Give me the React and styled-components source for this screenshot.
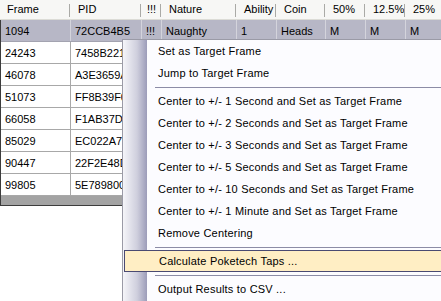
import React from "react";
import styled, { createGlobalStyle } from "styled-components";

const GlobalStyle = createGlobalStyle`
	html, body {
		margin: 0;
		padding: 0;
		background: #ffffff;
		overflow: hidden;
	}
	body {
		font-family: "Liberation Sans", Arial, sans-serif;
		font-size: 11px;
		color: #000000;
	}
`;

const COLS = "70px 71px 20px 75px 40px 49px 40px 40px 40px";

const Page = styled.div`
	position: relative;
	width: 441px;
	height: 301px;
	overflow: hidden;
	background: #ffffff;
`;

const ListView = styled.div`
	width: 447px;
	display: flex;
	flex-direction: column;
`;

const Header = styled.div`
	display: grid;
	grid-template-columns: 71px 71px 20px 75px 40px 49px 40px 40px 40px;
	height: 19px;
	background: #f7f7f5;
	border-bottom: 1px solid #dcdcd6;
`;

const HeadCell = styled.div`
	position: relative;
	padding-left: ${(p) => p.$pad || 8}px;
	line-height: 19px;
	white-space: nowrap;
	overflow: hidden;

	&::after {
		content: "";
		position: absolute;
		right: ${(p) => p.$sep || 1}px;
		top: 4px;
		bottom: 2px;
		width: 1px;
		background: #aaaaa6;
	}
`;

const Body = styled.div`
	border-left: 1px solid #3c3c3c;
	border-bottom: 1px solid #3c3c3c;
`;

const Row = styled.div`
	display: grid;
	grid-template-columns: ${COLS};
	height: 21px;
	border-bottom: 1px solid ${(p) => (p.$selected ? "#a3a3b0" : "#a8a8a8")};
	background: ${(p) => (p.$selected ? "#b7b7c6" : "#ffffff")};
`;

const Cell = styled.div`
	padding-left: 4px;
	line-height: 22px;
	white-space: nowrap;
	overflow: hidden;
	border-right: 1px solid ${(p) => (p.$selected ? "#d4d4dc" : "#a8a8a8")};
`;

const Filler = styled.div`
	height: 9px;
	background: #a3a3a3;
`;

const Menu = styled.div`
	position: absolute;
	left: 122px;
	top: 39px;
	width: 330px;
	height: 270px;
	border-left: 1px solid #9a9aa6;
	border-top: 1px solid #9a9aa6;
	background: linear-gradient(
		to right,
		#f5f5f9 0px,
		#cfcfdd 14px,
		#9c9cb9 24px,
		#fcfcff 24px
	);
	display: flex;
	flex-direction: column;
`;

const Item = styled.div`
	height: 22px;
	line-height: 22px;
	padding-left: 35px;
	letter-spacing: 0.2px;
	white-space: nowrap;
	box-sizing: border-box;

	${(p) =>
		p.$active &&
		`
		margin: 0 3px 0 1px;
		padding-left: 34px;
		line-height: 20px;
		border: 1px solid #4a4a72;
		background: #ffeec4;
	`}
`;

const Separator = styled.div`
	height: 6px;
	display: flex;
	align-items: center;
	padding-left: 32px;

	&::before {
		content: "";
		flex: 1;
		height: 1px;
		background: #8c8ca6;
	}
`;

const headers = ["Frame", "PID", "!!!", "Nature", "Ability", "Coin", "50%", "12.5%", "25%"];

const rows = [
	["1094", "72CCB4B5", "!!!", "Naughty", "1", "Heads", "M", "M", "M"],
	["24243", "7458B221"],
	["46078", "A3E3659A"],
	["51073", "FF8B39F0"],
	["66058", "F1AB37D"],
	["85029", "EC022A7E"],
	["90447", "22F2E48D"],
	["99805", "5E789800"],
];

const menu = [
	"Set as Target Frame",
	"Jump to Target Frame",
	"-",
	"Center to +/- 1 Second and Set as Target Frame",
	"Center to +/- 2 Seconds and Set as Target Frame",
	"Center to +/- 3 Seconds and Set as Target Frame",
	"Center to +/- 5 Seconds and Set as Target Frame",
	"Center to +/- 10 Seconds and Set as Target Frame",
	"Center to +/- 1 Minute and Set as Target Frame",
	"Remove Centering",
	"-",
	"Calculate Poketech Taps ...",
	"-",
	"Output Results to CSV ...",
];

const App = () => (
	<Page>
		<GlobalStyle />
		<ListView>
			<Header>
				{headers.map((h, i) => (
					<HeadCell key={h} $pad={i === 2 ? 5 : 7}>
						{h}
					</HeadCell>
				))}
			</Header>
			<Body>
				{rows.map((r, i) => (
					<Row key={r[0]} $selected={i === 0}>
						{headers.map((h, j) => (
							<Cell key={h} $selected={i === 0}>
								{r[j] || ""}
							</Cell>
						))}
					</Row>
				))}
				<Filler />
			</Body>
		</ListView>
		<Menu>
			{menu.map((m, i) =>
				m === "-" ? (
					<Separator key={i} />
				) : (
					<Item key={i} $active={m.startsWith("Calculate")}>
						{m}
					</Item>
				)
			)}
		</Menu>
	</Page>
);

export default App;
